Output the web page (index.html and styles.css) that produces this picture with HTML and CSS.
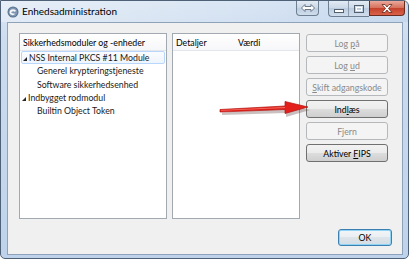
FILE: index.html
```html
<!DOCTYPE html>
<html lang="da">

<head>
    <meta charset="UTF-8" />
    <title>Enhedsadministration</title>
    <link rel="stylesheet" href="styles.css">
</head>

<body>
    <div class="window">
        <div class="titlebar">
            <svg class="app-icon" width="12" height="12" viewBox="0 0 12 12">
                <circle cx="6" cy="6" r="5.5" fill="#56718f" />
                <circle cx="6" cy="6" r="4.5" fill="#7d95b0" />
                <path d="M3 4.5 Q6 2 9 4.5 L8 6 Q6 4.5 4 6.5 Q6 8 8.5 7.5 Q6 10.5 3 8 Q2 6 3 4.5 Z" fill="#f4f6f8" />
            </svg>
            <span class="title">Enhedsadministration</span>
            <div class="caption">
                <span class="cap cap-extra">
                    <svg width="14" height="8" viewBox="0 0 14 8">
                        <path d="M0.5 4 L4 0.5 L4 2.5 L10 2.5 L10 0.5 L13.5 4 L10 7.5 L10 5.5 L4 5.5 L4 7.5 Z" fill="#fff" stroke="#6b7785" />
                    </svg>
                </span>
                <span class="cap-group">
                    <span class="cap cap-min">
                        <svg width="10" height="4" viewBox="0 0 10 4">
                            <rect x="0.5" y="0.5" width="9" height="3" fill="#fff" stroke="#55606e" />
                        </svg>
                    </span>
                    <span class="cap cap-max">
                        <svg width="10" height="8" viewBox="0 0 10 8">
                            <rect x="0.5" y="0.5" width="9" height="7" fill="none" stroke="#55606e" />
                            <rect x="2.5" y="2.5" width="5" height="3" fill="none" stroke="#fff" />
                        </svg>
                    </span>
                </span>
                <span class="cap cap-close">
                    <svg width="12" height="9" viewBox="0 0 12 9">
                        <path d="M1 0.5 L4 0.5 L6 3 L8 0.5 L11 0.5 L7.5 4.5 L11 8.5 L8 8.5 L6 6 L4 8.5 L1 8.5 L4.5 4.5 Z" fill="#fff" stroke="#6a2418" stroke-width="0.8" />
                    </svg>
                </span>
            </div>
        </div>

        <div class="client">
            <div class="main">
                <div class="panel tree">
                    <div class="head">Sikkerhedsmoduler og -enheder</div>
                    <div class="row hover"><span class="twisty"></span>NSS Internal PKCS #11 Module</div>
                    <div class="row child">Generel krypteringstjeneste</div>
                    <div class="row child">Software sikkerhedsenhed</div>
                    <div class="row"><span class="twisty"></span>Indbygget rodmodul</div>
                    <div class="row child">Builtin Object Token</div>
                </div>
                <div class="panel details">
                    <div class="head">
                        <span class="col-name">Detaljer</span>
                        <span>Værdi</span>
                    </div>
                </div>
                <div class="actions">
                    <button class="btn" disabled>Log <u>p</u>å</button>
                    <button class="btn" disabled>Log <u>u</u>d</button>
                    <button class="btn" disabled><u>S</u>kift adgangskode</button>
                    <button class="btn">Ind<u>l</u>æs</button>
                    <button class="btn" disabled>Fjern</button>
                    <button class="btn">Aktiver <u>F</u>IPS</button>
                </div>
            </div>
            <div class="footer">
                <button class="btn default">OK</button>
            </div>
        </div>

        <!-- red pointer drawn over the dialog -->
        <svg class="arrow" width="100" height="26" viewBox="0 0 100 26">
            <path d="M7 16.5 L71 13 L71 8 L95 14 L71 21 L71 17 L7 19 Z" fill="#6b4a4a" opacity="0.35" />
            <path d="M5 13.5 L70 10 L70 5.5 L93 11 L70 17.5 L70 13.5 L5 16 Z" fill="#e3201c" stroke="#b3120f" stroke-width="0.7" />
            <path d="M6 14 L70 11 L70 12 L6 14.8 Z" fill="#f26b5e" />
        </svg>
    </div>
</body>

</html>
```

FILE: styles.css
```css
* {
    box-sizing: border-box;
}

body {
    margin: 0;
    background: #fff;
    font-family: "Lato", "Open Sans", sans-serif;
    font-size: 8.75px;
    color: #000;
}

.window {
    position: relative;
    width: 409px;
    height: 259px;
    border: 1px solid #4f6177;
    border-radius: 0 6px 5px 5px;
    background: linear-gradient(180deg, #dae6f4 0, #cddcef 40px, #bed3eb 100%);
    display: flex;
    flex-direction: column;
}

/* title bar */

.titlebar {
    height: 21px;
    display: flex;
    align-items: flex-start;
    background: linear-gradient(90deg, rgba(255, 255, 255, 0.35) 0, rgba(255, 255, 255, 0) 60%, rgba(160, 190, 225, 0.25) 100%);
}

.app-icon {
    margin: 5px 3px 0 6px;
}

.title {
    margin-top: 4px;
    font-size: 10px;
    line-height: 13px;
}

.caption {
    margin-left: auto;
    margin-right: 3px;
    display: flex;
}

.cap {
    height: 15px;
    display: flex;
    align-items: center;
    justify-content: center;
}

.cap-extra {
    width: 23px;
    margin-right: 9px;
    border: 1px solid #6f7f92;
    border-top: none;
    border-radius: 0 0 4px 4px;
    background: linear-gradient(#e3ebf4, #c9d7e7 50%, #bccde1 50%, #d0dded);
}

.cap-group {
    display: flex;
    border: 1px solid #6f7f92;
    border-top: none;
    border-right: none;
    border-radius: 0 0 0 4px;
    background: linear-gradient(#e3ebf4, #c9d7e7 50%, #bccde1 50%, #d0dded);
}

.cap-min {
    width: 20px;
    padding-top: 5px;
    border-right: 1px solid #8d9cad;
}

.cap-max {
    width: 20px;
}

.cap-close {
    width: 36px;
    border: 1px solid #6b2d22;
    border-top: none;
    border-radius: 0 0 4px 0;
    background: linear-gradient(#eaa99b, #d66f5a 50%, #c4412b 50%, #d9624b);
}

/* dialog body */

.client {
    flex: 1;
    margin: 0 5px 3px 6px;
    border: 1px solid #8ea2ba;
    background: #f0f0f0;
    padding: 10px 10px 7px 11px;
    display: flex;
    flex-direction: column;
}

.main {
    display: flex;
    height: 186px;
    margin-right: 4px;
}

.panel {
    border: 1px solid #a3a9b1;
    background: #fff;
}

.tree {
    width: 148px;
}

.details {
    width: 128px;
    margin-left: 5px;
}

.head {
    height: 17px;
    padding-left: 3px;
    line-height: 17px;
    border-bottom: 1px solid #e3e6ea;
    background: linear-gradient(#fff, #f6f7f9);
}

.col-name {
    display: inline-block;
    width: 60px;
}

.row {
    height: 13.3px;
    line-height: 13px;
    padding-left: 8px;
    white-space: nowrap;
    display: flex;
    align-items: center;
    color: #1a1a1a;
}

.row.hover {
    margin: 0 1px;
    padding-left: 7px;
    border: 1px solid #b9d7fc;
    border-radius: 2px;
    background: linear-gradient(#fbfcfe, #eef5fd);
}

.row.child {
    padding-left: 17px;
}

.twisty {
    width: 0;
    height: 0;
    margin: 2px 2px 0 -6px;
    border-left: 4px solid transparent;
    border-bottom: 4px solid #262626;
}

/* buttons */

.actions {
    width: 82px;
    margin-left: 6px;
    padding-top: 1px;
    display: flex;
    flex-direction: column;
    gap: 4px;
}

.btn {
    height: 18px;
    padding: 0;
    font: inherit;
    line-height: 15px;
    color: #000;
    border: 1px solid #707070;
    border-radius: 3px;
    background: linear-gradient(#f2f2f2 0, #ebebeb 50%, #dddddd 50%, #cfcfcf 100%);
}

.btn:disabled {
    color: #8a8a8a;
    border-color: #b5b9bc;
    background: #f4f4f4;
}

.footer {
    margin-top: 10px;
    display: flex;
    justify-content: flex-end;
}

.btn.default {
    width: 54px;
    height: 17px;
    border-color: #3c7fb1;
    box-shadow: inset 0 0 0 1px #8fd4f5;
    background: linear-gradient(#f3f6f8 0, #e9eef2 50%, #dde4ea 50%, #d4dde4 100%);
}

.arrow {
    position: absolute;
    left: 214px;
    top: 95px;
}
```
